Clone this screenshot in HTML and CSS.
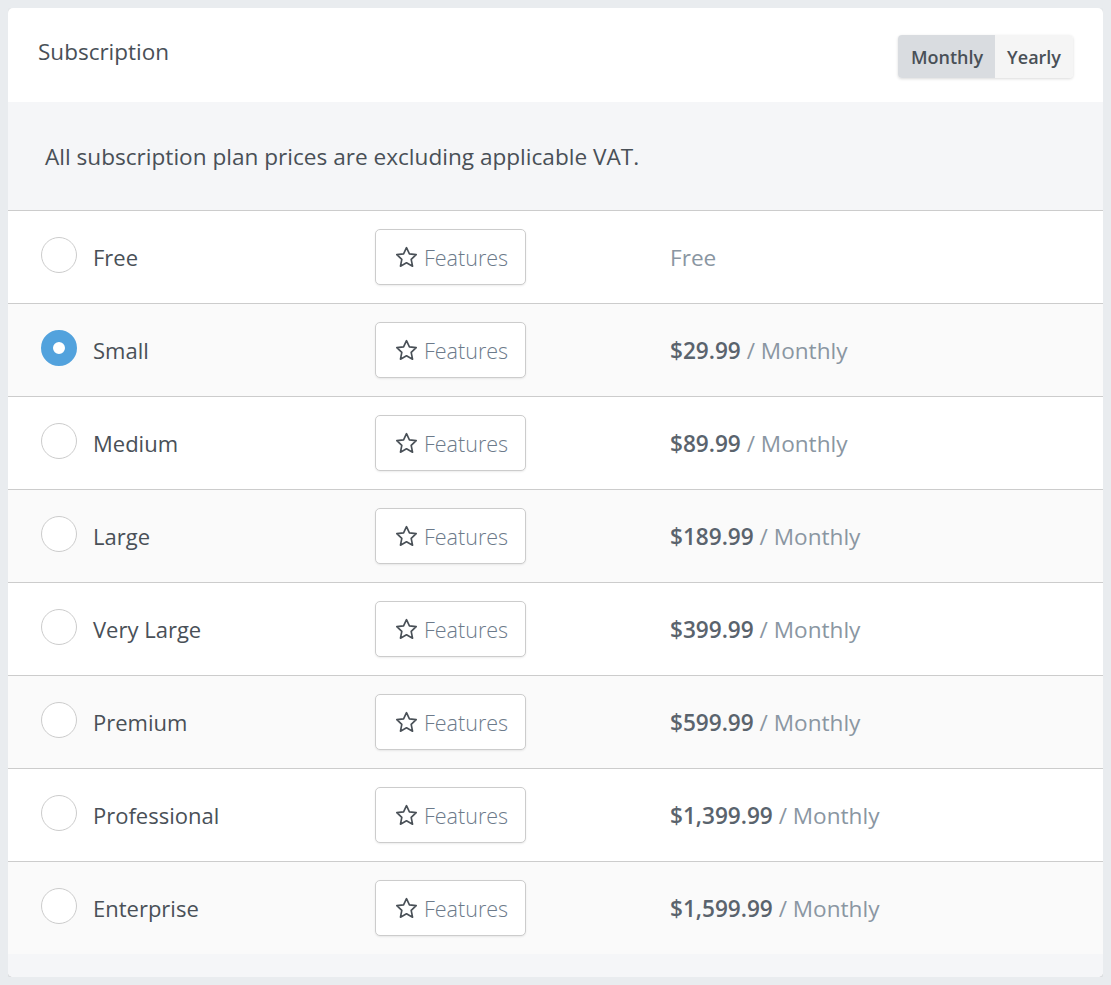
FILE: index.html
```html
<!DOCTYPE html>
<html lang="en">

<head>
  <meta charset="UTF-8">
  <meta name="viewport" content="width=device-width, initial-scale=1.0">
  <title>Subscription</title>
  <link rel="stylesheet" href="styles.css">
</head>

<body>

  <section class="card">
    <div class="card-header">
      <h2>Subscription</h2>
      <div class="toggle">
        <button class="toggle-btn active">Monthly</button>
        <button class="toggle-btn">Yearly</button>
      </div>
    </div>

    <div class="notice">
      <p>All subscription plan prices are excluding applicable VAT.</p>
    </div>

    <ul class="plans">
      <li class="plan">
        <label class="plan-name"><span class="radio"></span>Free</label>
        <button class="features-btn"><svg viewBox="0 0 24 24"><polygon points="12,2.6 14.8,8.5 21.3,9.3 16.5,13.8 17.8,20.3 12,17.1 6.2,20.3 7.5,13.8 2.7,9.3 9.2,8.5"/></svg>Features</button>
        <div class="price"><span class="per">Free</span></div>
      </li>
      <li class="plan">
        <label class="plan-name"><span class="radio checked"></span>Small</label>
        <button class="features-btn"><svg viewBox="0 0 24 24"><polygon points="12,2.6 14.8,8.5 21.3,9.3 16.5,13.8 17.8,20.3 12,17.1 6.2,20.3 7.5,13.8 2.7,9.3 9.2,8.5"/></svg>Features</button>
        <div class="price"><span class="amount">$29.99</span> <span class="per">/ Monthly</span></div>
      </li>
      <li class="plan">
        <label class="plan-name"><span class="radio"></span>Medium</label>
        <button class="features-btn"><svg viewBox="0 0 24 24"><polygon points="12,2.6 14.8,8.5 21.3,9.3 16.5,13.8 17.8,20.3 12,17.1 6.2,20.3 7.5,13.8 2.7,9.3 9.2,8.5"/></svg>Features</button>
        <div class="price"><span class="amount">$89.99</span> <span class="per">/ Monthly</span></div>
      </li>
      <li class="plan">
        <label class="plan-name"><span class="radio"></span>Large</label>
        <button class="features-btn"><svg viewBox="0 0 24 24"><polygon points="12,2.6 14.8,8.5 21.3,9.3 16.5,13.8 17.8,20.3 12,17.1 6.2,20.3 7.5,13.8 2.7,9.3 9.2,8.5"/></svg>Features</button>
        <div class="price"><span class="amount">$189.99</span> <span class="per">/ Monthly</span></div>
      </li>
      <li class="plan">
        <label class="plan-name"><span class="radio"></span>Very Large</label>
        <button class="features-btn"><svg viewBox="0 0 24 24"><polygon points="12,2.6 14.8,8.5 21.3,9.3 16.5,13.8 17.8,20.3 12,17.1 6.2,20.3 7.5,13.8 2.7,9.3 9.2,8.5"/></svg>Features</button>
        <div class="price"><span class="amount">$399.99</span> <span class="per">/ Monthly</span></div>
      </li>
      <li class="plan">
        <label class="plan-name"><span class="radio"></span>Premium</label>
        <button class="features-btn"><svg viewBox="0 0 24 24"><polygon points="12,2.6 14.8,8.5 21.3,9.3 16.5,13.8 17.8,20.3 12,17.1 6.2,20.3 7.5,13.8 2.7,9.3 9.2,8.5"/></svg>Features</button>
        <div class="price"><span class="amount">$599.99</span> <span class="per">/ Monthly</span></div>
      </li>
      <li class="plan">
        <label class="plan-name"><span class="radio"></span>Professional</label>
        <button class="features-btn"><svg viewBox="0 0 24 24"><polygon points="12,2.6 14.8,8.5 21.3,9.3 16.5,13.8 17.8,20.3 12,17.1 6.2,20.3 7.5,13.8 2.7,9.3 9.2,8.5"/></svg>Features</button>
        <div class="price"><span class="amount">$1,399.99</span> <span class="per">/ Monthly</span></div>
      </li>
      <li class="plan">
        <label class="plan-name"><span class="radio"></span>Enterprise</label>
        <button class="features-btn"><svg viewBox="0 0 24 24"><polygon points="12,2.6 14.8,8.5 21.3,9.3 16.5,13.8 17.8,20.3 12,17.1 6.2,20.3 7.5,13.8 2.7,9.3 9.2,8.5"/></svg>Features</button>
        <div class="price"><span class="amount">$1,599.99</span> <span class="per">/ Monthly</span></div>
      </li>
    </ul>

    <div class="card-footer"></div>
  </section>

</body>

</html>
```

FILE: styles.css
```css
body {
  margin: 8px;
  font-family: "Open Sans", "Noto Sans", sans-serif;
  background: #e9ecef;
  color: #495057;
}

/* Card */
.card {
  background: #fff;
  border-radius: 5px;
  box-shadow: 0 1px 3px rgba(0, 0, 0, 0.15);
  overflow: hidden;
}

.card-header {
  height: 94px;
  padding: 0 30px;
  display: flex;
  justify-content: space-between;
  align-items: flex-start;
}

.card-header h2 {
  margin: 28px 0 0;
  font-size: 22.5px;
  font-weight: 400;
  color: #495057;
}

/* Monthly / Yearly toggle */
.toggle {
  margin-top: 27px;
  display: flex;
  border-radius: 4px;
  box-shadow: 0 1px 3px rgba(0, 0, 0, 0.15);
  overflow: hidden;
}

.toggle-btn {
  height: 43px;
  padding: 0 12px;
  border: none;
  background: #f5f5f5;
  font-family: inherit;
  font-size: 18px;
  font-weight: 600;
  color: #495057;
  cursor: pointer;
}

.toggle-btn.active {
  background: #d9dce0;
  padding: 0 12px 0 13px;
}

/* VAT notice */
.notice {
  height: 108px;
  padding: 0 37px;
  display: flex;
  align-items: center;
  background: #f5f6f8;
  border-bottom: 1px solid #ccc;
}

.notice p {
  margin: 0;
  font-size: 22.6px;
}

/* Plan rows */
.plans {
  list-style: none;
  margin: 0;
  padding: 0;
}

.plan {
  height: 92px;
  padding-left: 33px;
  display: grid;
  grid-template-columns: 334px 295px 1fr;
  align-items: center;
  border-bottom: 1px solid #ccc;
  font-size: 22px;
}

.plan:nth-child(even) {
  background: #fafafa;
}

.plan:last-child {
  border-bottom: none;
}

.plan-name {
  display: flex;
  align-items: center;
  gap: 16px;
  cursor: pointer;
}

.radio {
  width: 34px;
  height: 34px;
  margin-top: -4px;
  border: 1px solid #ccc;
  border-radius: 50%;
  background: #fff;
}

.radio.checked {
  width: 12px;
  height: 12px;
  border: 12px solid #52a2dd;
}

.features-btn {
  width: 151px;
  height: 56px;
  display: flex;
  align-items: center;
  gap: 5px;
  padding: 0 0 0 18px;
  background: #fff;
  border: 1px solid #ccc;
  border-radius: 5px;
  box-shadow: 0 1px 2px rgba(0, 0, 0, 0.08);
  font-family: inherit;
  font-size: 21.5px;
  font-weight: 300;
  color: #6c7a8a;
  cursor: pointer;
}

.features-btn svg {
  width: 25px;
  height: 25px;
  fill: none;
  stroke: #495057;
  stroke-width: 1.6;
  stroke-linejoin: round;
}

.price {
  font-size: 22.6px;
}

.price .amount {
  font-weight: 600;
  color: #5a636d;
}

.price .per {
  color: #8a96a2;
}

.card-footer {
  height: 23px;
  background: #f5f6f8;
}
```
